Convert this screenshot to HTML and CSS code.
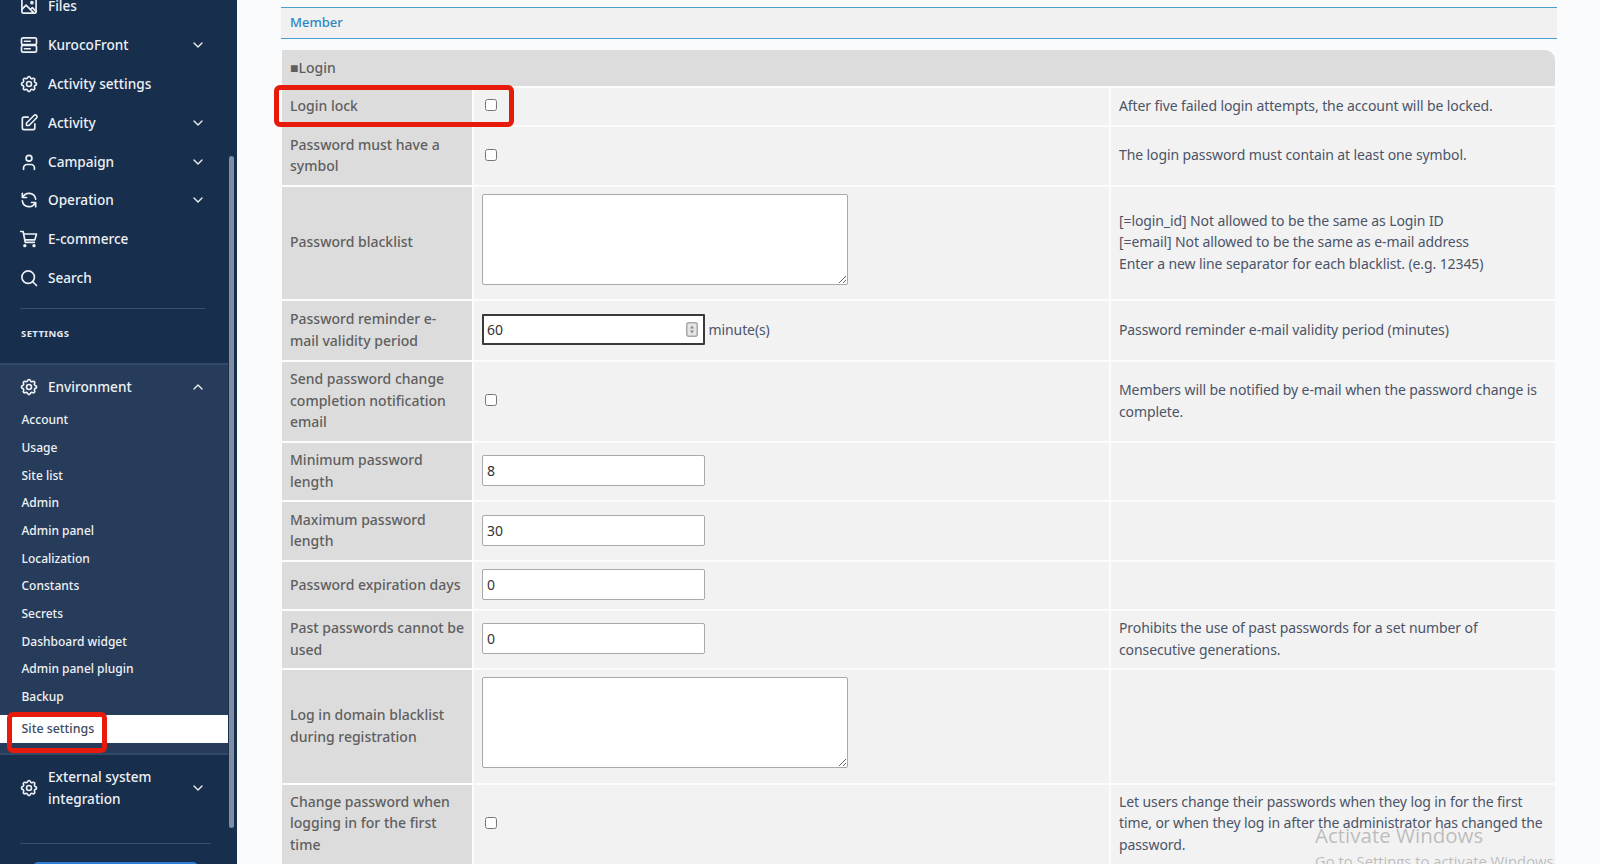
FILE: index.html
```html
<!DOCTYPE html>
<html lang="en">
<head>
<meta charset="utf-8">
<title>Site settings</title>
<link rel="stylesheet" href="styles.css">
</head>
<body>
<svg class="defs" width="0" height="0" aria-hidden="true">
  <symbol id="i-gear" viewBox="0 0 24 24"><path d="M10.3 4.3c.4-1.8 3-1.8 3.4 0a1.7 1.7 0 0 0 2.6 1.1c1.5-.9 3.3.8 2.4 2.4a1.7 1.7 0 0 0 1 2.5c1.8.4 1.8 3 0 3.4a1.7 1.7 0 0 0-1 2.6c.9 1.5-.9 3.3-2.4 2.4a1.7 1.7 0 0 0-2.6 1c-.4 1.8-3 1.8-3.4 0a1.7 1.7 0 0 0-2.5-1c-1.6.9-3.3-.9-2.4-2.4a1.7 1.7 0 0 0-1.1-2.6c-1.8-.4-1.8-3 0-3.4a1.7 1.7 0 0 0 1.1-2.5c-.9-1.6.8-3.3 2.4-2.4a1.7 1.7 0 0 0 2.5-1.1z"/><circle cx="12" cy="12" r="3"/></symbol>
  <symbol id="i-chev" viewBox="0 0 24 24"><path d="M6 9l6 6 6-6"/></symbol>
  <symbol id="i-chev-up" viewBox="0 0 24 24"><path d="M6 15l6-6 6 6"/></symbol>
</svg>
<div class="app">
  <aside class="sidebar">
    <nav class="nav">
      <a class="item"><svg class="ico" viewBox="0 0 24 24"><rect x="3.5" y="3.5" width="17" height="17" rx="2"/><circle cx="15.5" cy="8" r="1.2"/><path d="M3.5 16l5-5 9.5 9.5M14 16l2-2 4.5 4.5"/></svg><span class="label">Files</span></a>
      <a class="item"><svg class="ico" viewBox="0 0 24 24"><rect x="3" y="3.5" width="18" height="8" rx="2"/><rect x="3" y="12.5" width="18" height="8" rx="2"/><path d="M6.5 7.5h7M6.5 16.5h7"/></svg><span class="label">KurocoFront</span><svg class="chev"><use href="#i-chev"/></svg></a>
      <a class="item"><svg class="ico"><use href="#i-gear"/></svg><span class="label">Activity settings</span></a>
      <a class="item"><svg class="ico" viewBox="0 0 24 24"><path d="M11 5H6a2 2 0 0 0-2 2v11a2 2 0 0 0 2 2h11a2 2 0 0 0 2-2v-5"/><path d="M9 15v-3l9-9a2.1 2.1 0 0 1 3 3l-9 9z"/></svg><span class="label">Activity</span><svg class="chev"><use href="#i-chev"/></svg></a>
      <a class="item"><svg class="ico" viewBox="0 0 24 24"><circle cx="12" cy="7.5" r="3.5"/><path d="M5.5 21v-2a4 4 0 0 1 4-4h5a4 4 0 0 1 4 4v2"/></svg><span class="label">Campaign</span><svg class="chev"><use href="#i-chev"/></svg></a>
      <a class="item"><svg class="ico" viewBox="0 0 24 24"><path d="M20 11a8.1 8.1 0 0 0-15.5-2M4 4v5h5"/><path d="M4 13a8.1 8.1 0 0 0 15.5 2M20 20v-5h-5"/></svg><span class="label">Operation</span><svg class="chev"><use href="#i-chev"/></svg></a>
      <a class="item"><svg class="ico" viewBox="0 0 24 24"><circle cx="7" cy="20" r="1"/><circle cx="18" cy="20" r="1"/><path d="M2 3h3l2.5 13h11M5.5 6H21l-2 7H7"/></svg><span class="label">E-commerce</span></a>
      <a class="item"><svg class="ico" viewBox="0 0 24 24"><circle cx="11" cy="11" r="7.5"/><path d="M21 21l-4.5-4.5"/></svg><span class="label">Search</span></a>
    </nav>
    <hr class="rule">
    <div class="section-title">SETTINGS</div>
    <div class="panel">
      <a class="item"><svg class="ico"><use href="#i-gear"/></svg><span class="label">Environment</span><svg class="chev"><use href="#i-chev-up"/></svg></a>
      <ul class="sub">
        <li>Account</li><li>Usage</li><li>Site list</li><li>Admin</li><li>Admin panel</li><li>Localization</li><li>Constants</li><li>Secrets</li><li>Dashboard widget</li><li>Admin panel plugin</li><li>Backup</li><li class="active">Site settings</li>
      </ul>
    </div>
    <a class="item item-tall"><svg class="ico"><use href="#i-gear"/></svg><span class="label">External system<br>integration</span><svg class="chev"><use href="#i-chev"/></svg></a>
    <hr class="rule rule-low">
    <div class="cta"></div>
    <div class="scrollbar"></div>
  </aside>
  <main class="main">
    <h2 class="tab-head">Member</h2>
    <table class="form">
      <colgroup><col class="c1"><col class="c2"><col class="c3"></colgroup>
      <tr class="r-h"><th colspan="3" class="head">■Login</th></tr>
      <tr class="r1"><th>Login lock</th><td><input type="checkbox"></td><td>After five failed login attempts, the account will be locked.</td></tr>
      <tr class="r2"><th>Password must have a symbol</th><td><input type="checkbox"></td><td>The login password must contain at least one symbol.</td></tr>
      <tr class="r3"><th>Password blacklist</th><td><textarea></textarea></td><td>[=login_id] Not allowed to be the same as Login ID<br>[=email] Not allowed to be the same as e-mail address<br>Enter a new line separator for each blacklist. (e.g. 12345)</td></tr>
      <tr class="r4"><th>Password reminder e-<br>mail validity period</th><td><span class="num-wrap"><input class="num focus" type="text" value="60"><svg class="spin" viewBox="0 0 12 15"><rect x=".75" y=".75" width="10.5" height="13.5" rx="2"/><path d="M6 3.5l2 3H4zM6 11.5l2-3H4z"/></svg></span> <span class="unit">minute(s)</span></td><td>Password reminder e-mail validity period (minutes)</td></tr>
      <tr class="r5"><th>Send password change completion notification email</th><td><input type="checkbox"></td><td>Members will be notified by e-mail when the password change is complete.</td></tr>
      <tr class="r6"><th>Minimum password length</th><td><input class="num" type="text" value="8"></td><td></td></tr>
      <tr class="r7"><th>Maximum password length</th><td><input class="num" type="text" value="30"></td><td></td></tr>
      <tr class="r8"><th>Password expiration days</th><td><input class="num" type="text" value="0"></td><td></td></tr>
      <tr class="r9"><th>Past passwords cannot be used</th><td><input class="num" type="text" value="0"></td><td>Prohibits the use of past passwords for a set number of consecutive generations.</td></tr>
      <tr class="r10"><th>Log in domain blacklist during registration</th><td><textarea></textarea></td><td></td></tr>
      <tr class="r11"><th>Change password when logging in for the first time</th><td><input type="checkbox"></td><td>Let users change their passwords when they log in for the first time, or when they log in after the administrator has changed the password.</td></tr>
    </table>
  </main>
</div>
<div class="mark mark-a"></div>
<div class="mark mark-b"></div>
<div class="activate"><div class="a1">Activate Windows</div><div class="a2">Go to Settings to activate Windows.</div></div>
</body>
</html>
```
FILE: styles.css
```css
* { box-sizing: border-box; }
html, body { margin: 0; height: 100%; overflow: hidden; }
body { font-family: "Noto Sans", "Liberation Sans", sans-serif; font-size: 14px; background: #f9fbfd; position: relative; }
.defs { position: absolute; }
.app { display: flex; height: 864px; overflow: hidden; }

.sidebar { width: 237px; flex: none; height: 864px; background: #172e4d; color: #f2f4f7; position: relative; overflow: hidden; }
.nav { margin-top: -13px; }
.item { display: flex; align-items: center; height: 38.8px; padding: 0 31px 0 19px; color: #eef1f5; font-size: 13.6px; font-weight: 500; }
.ico, .item > svg:first-child { width: 20px; height: 20px; flex: none; fill: none; stroke: #eef1f5; stroke-width: 2; stroke-linecap: round; stroke-linejoin: round; }
.label { margin-left: 9px; flex: 1; line-height: 22px; }
.chev { width: 16px; height: 16px; flex: none; fill: none; stroke: #eef1f5; stroke-width: 2; stroke-linecap: round; stroke-linejoin: round; }
.rule { border: 0; border-top: 1px solid #3a4f6c; margin: 11px 32px 0 20px; }
.section-title { margin: 19px 0 0 21px; font-size: 9.5px; font-weight: 700; letter-spacing: .4px; line-height: 12px; color: #e6eaf0; }
.panel { margin-top: 23px; width: 228px; height: 392px; background: #273c5a; border-top: 2px solid #33496a; border-bottom: 2px solid #33496a; padding-top: 2px; }
.panel .item { padding-right: 22px; }
.sub { list-style: none; margin: 0; padding: 0; font-size: 12px; font-weight: 500; color: #eef1f5; }
.sub li { height: 27.7px; line-height: 27.7px; padding-left: 21.5px; }
.sub li.active { background: #fff; color: #3a4a62; margin-top: 4px; height: 28px; line-height: 28px; font-size: 12.4px; }
.item-tall { height: 66px; }
.rule-low { margin: 22px 26px 0 20px; }
.cta { margin: 18px 39px 0 33px; height: 30px; background: #2f7fd6; border-radius: 5px; }
.scrollbar { position: absolute; left: 229px; top: 156px; width: 5px; height: 672px; background: #7f8ea3; border-radius: 3px; }

.main { flex: 1; min-width: 0; padding: 7px 43px 0 44px; }
.tab-head { margin: 0; width: 1276px; height: 32px; background: #f1f1f1; border-top: 1px solid #4b9fd0; border-bottom: 1px solid #4b9fd0; color: #2a87c4; font-size: 13px; font-weight: 500; line-height: 29px; padding-left: 9px; }
.form { width: 1273px; margin: 11px 0 0 1px; border-collapse: separate; border-spacing: 0; table-layout: fixed; color: #5d5d5d; }
.c1 { width: 192px; } .c2 { width: 637px; } .c3 { width: 444px; }
.form th, .form td { padding: 0 4px 2px 8px; text-align: left; vertical-align: middle; line-height: 21.4px; font-size: 14px; border-bottom: 2px solid #fcfcfc; }
.form th { background: #dcdcdc; font-weight: 500; color: #5f5f5f; border-right: 2px solid #fcfcfc; }
.form td { background: #f2f2f2; color: #4b5468; font-weight: 400; letter-spacing: -.1px; }
.form td:nth-child(2) { border-right: 2px solid #fcfcfc; }
.form th.head { border-right: 0; border-radius: 0 10px 0 0; height: 38px; padding-bottom: 0; }
.r1 th, .r1 td { height: 39px; } .r2 th, .r2 td { height: 60px; } .r3 th, .r3 td { height: 114px; }
.r4 th, .r4 td { height: 61px; } .r5 th, .r5 td { height: 81px; } .r6 th, .r6 td { height: 59px; }
.r7 th, .r7 td { height: 60px; } .r8 th, .r8 td { height: 49px; } .r9 th, .r9 td { height: 59px; }
.r10 th, .r10 td { height: 115px; }
.r11 th, .r11 td { height: 86px; padding-bottom: 8px; }
.form input[type=checkbox] { width: 12px; height: 12px; margin: 0 0 4px 3px; vertical-align: middle; }
.form textarea { display: block; width: 366px; height: 91px; margin: 0 0 6px; border: 1px solid #a9a9a9; border-radius: 2px; background: #fff; }
.num-wrap { display: inline-block; position: relative; vertical-align: middle; line-height: 0; }
.num { width: 223px; height: 31px; border: 1px solid #a9a9a9; border-radius: 2px; padding: 1px 4px; background: #fff; font: 400 14px "Noto Sans", sans-serif; color: #333; vertical-align: middle; }
.focus { border: 2px solid #3a3a3a; border-radius: 1px; padding: 0 3px; }
.spin { position: absolute; right: 7px; top: 8px; width: 12px; height: 15px; }
.spin rect { fill: #e6e6e6; stroke: #a8a8a8; stroke-width: 1.5; }
.spin path { fill: #8a8a8a; }
.unit { color: #4b5468; vertical-align: middle; }

.mark { position: absolute; border: 5px solid #e81a0c; border-radius: 6px; pointer-events: none; }
.mark-a { left: 274px; top: 85px; width: 240px; height: 42px; }
.mark-b { left: 7px; top: 712px; width: 100px; height: 41px; }
.activate { position: absolute; left: 1315px; top: 820px; width: 240px; overflow: hidden; white-space: nowrap; font-family: "Open Sans", sans-serif; color: rgba(120,120,120,.45); }
.a1 { font-size: 20.5px; line-height: 30px; }
.a2 { font-size: 14.8px; line-height: 22px; }
```
